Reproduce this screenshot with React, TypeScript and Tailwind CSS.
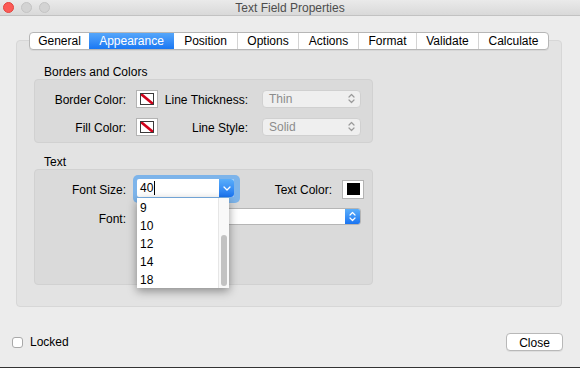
import React from "react";

const tabs: [string, number][] = [
  ["General", 59],
  ["Appearance", 85],
  ["Position", 63],
  ["Options", 61],
  ["Actions", 60],
  ["Format", 58],
  ["Validate", 62],
  ["Calculate", 70],
];

function UpDown({ color }: { color: string }) {
  return (
    <svg width="7" height="11" viewBox="0 0 7 11" fill="none">
      <path d="M1 4 L3.5 1.5 L6 4" stroke={color} strokeWidth="1.2" strokeLinecap="round" strokeLinejoin="round" />
      <path d="M1 7 L3.5 9.5 L6 7" stroke={color} strokeWidth="1.2" strokeLinecap="round" strokeLinejoin="round" />
    </svg>
  );
}

function Down() {
  return (
    <svg width="8" height="5" viewBox="0 0 8 5" fill="none">
      <path d="M1 1 L4 4 L7 1" stroke="white" strokeWidth="1.3" strokeLinecap="round" strokeLinejoin="round" />
    </svg>
  );
}

function NoColorSwatch() {
  return (
    <div className="w-[22px] h-[18px] border border-[#b3b3b3] bg-white flex items-center justify-center">
      <div className="w-[14px] h-[12px] border border-[#3a3a3a] bg-white relative overflow-hidden">
        <svg width="12" height="10" viewBox="0 0 12 10" className="absolute inset-0">
          <line x1="0" y1="0" x2="12" y2="10" stroke="#d0021b" strokeWidth="2.6" />
        </svg>
      </div>
    </div>
  );
}

function DisabledSelect({ value }: { value: string }) {
  return (
    <div className="w-[99px] h-[18px] rounded-[4px] border border-[#d0d0d0] bg-[#efefef] flex items-center justify-between pl-[6px] pr-[5px] text-[#8c8c8c]">
      <span>{value}</span>
      <UpDown color="#9a9a9a" />
    </div>
  );
}

export default function App() {
  return (
    <div className="w-[580px] h-[368px] bg-[#ececec] font-['Liberation_Sans',Arial,sans-serif] text-[12px] leading-[14px] text-black flex flex-col overflow-hidden relative">
      {/* title bar */}
      <div className="h-[16px] shrink-0 bg-gradient-to-b from-[#eaeaea] to-[#d9d9d9] border-b border-[#c2c2c2] flex items-center relative">
        <div className="flex gap-[7px] pl-[3px] relative z-10">
          <span className="w-[11px] h-[11px] rounded-full bg-[#fc5b57] border border-[#e2453f]" />
          <span className="w-[11px] h-[11px] rounded-full bg-[#d3d3d3] border border-[#c4c4c4]" />
          <span className="w-[11px] h-[11px] rounded-full bg-[#d3d3d3] border border-[#c4c4c4]" />
        </div>
        <div className="absolute inset-0 flex items-center justify-center text-[#4d4d4d]">Text Field Properties</div>
      </div>

      {/* tab bar */}
      <div className="mt-[16px] flex justify-center relative z-10">
        <div className="ml-[-2px] w-[520px] h-[18px] flex rounded-[4px] border border-[#b6b6b6] bg-white overflow-hidden shadow-[0_1px_0_rgba(0,0,0,0.05)]">
          {tabs.map(([name, w], i) => (
            <div
              key={name}
              style={{ width: w }}
              className={
                "h-full flex items-center justify-center leading-[16px] " +
                (i === 1
                  ? "bg-gradient-to-b from-[#55a6fa] to-[#1877f3] text-white"
                  : i >= 3
                  ? "border-l border-[#d4d4d4]"
                  : "")
              }
            >
              {name}
            </div>
          ))}
        </div>
      </div>

      {/* tab box */}
      <div className="ml-[16px] mt-[-10px] w-[546px] h-[267px] shrink-0 bg-[#e3e3e3] border border-[#d7d7d7] rounded-[4px] pt-[24px] pl-[17px]">
        <div className="pl-[10px] h-[14px]">Borders and Colors</div>
        <div className="w-[339px] h-[64px] bg-[#dadada] border border-[#d1d1d1] rounded-[4px] pt-[9px] flex flex-col gap-[9px]">
          <div className="flex items-center h-[19px]">
            <div className="w-[91px] text-right pt-[2px]">Border Color:</div>
            <div className="ml-[10px]"><NoColorSwatch /></div>
            <div className="w-[90px] text-right pt-[2px]">Line Thickness:</div>
            <div className="ml-[14px]"><DisabledSelect value="Thin" /></div>
          </div>
          <div className="flex items-center h-[19px]">
            <div className="w-[91px] text-right pt-[2px]">Fill Color:</div>
            <div className="ml-[10px]"><NoColorSwatch /></div>
            <div className="w-[90px] text-right pt-[2px]">Line Style:</div>
            <div className="ml-[14px]"><DisabledSelect value="Solid" /></div>
          </div>
        </div>

        <div className="pl-[10px] h-[14px] mt-[12px]">Text</div>
        <div className="w-[339px] h-[116px] bg-[#dadada] border border-[#d1d1d1] rounded-[4px] pt-[5px]">
          <div className="flex items-center h-[28px]">
            <div className="w-[91px] text-right pt-[1px]">Font Size:</div>
            <div className="ml-[7px] relative w-[107px] h-[28px] rounded-[5px] bg-[#7db4ea] z-20">
              <div className="absolute left-[4px] top-[4px] w-[97px] h-[18px] bg-white flex rounded-[2px]">
                <div className="flex-1 flex items-center pl-[3px]">
                  <span>40</span>
                  <span className="w-px h-[14px] bg-black ml-[1px]" />
                </div>
                <div className="w-[15px] h-full bg-gradient-to-b from-[#5aaefa] to-[#1a74f1] rounded-r-[3px] flex items-center justify-center">
                  <Down />
                </div>
              </div>
              {/* dropdown list */}
              <div className="absolute left-[4px] top-[23px] w-[92px] h-[90px] bg-white shadow-[0_3px_9px_rgba(0,0,0,0.4)] flex">
                <div className="flex-1 flex flex-col">
                  {["9", "10", "12", "14", "18"].map((v) => (
                    <div key={v} className="h-[18px] flex items-center pl-[3px] pt-[1px]">{v}</div>
                  ))}
                </div>
                <div className="w-[11px] h-full bg-[#f9f9f9] border-l border-[#e6e6e6] relative">
                  <div className="absolute left-[2px] top-[37px] w-[6px] h-[51px] rounded-full bg-[#c2c2c2]" />
                </div>
              </div>
            </div>
            <div className="w-[92px] text-right pt-[1px]">Text Color:</div>
            <div className="ml-[10px] w-[22px] h-[19px] border border-[#b3b3b3] bg-white flex items-center justify-center">
              <div className="w-[13px] h-[12px] bg-black" />
            </div>
          </div>
          <div className="flex items-center h-[17px] mt-[5px]">
            <div className="w-[91px] text-right pt-[4px]">Font:</div>
            <div className="ml-[11px] w-[224px] h-[17px] bg-white border border-[#b5b5b5] rounded-[3px] flex justify-end overflow-hidden">
              <div className="w-[15px] h-full bg-gradient-to-b from-[#5aaefa] to-[#1a74f1] flex items-center justify-center">
                <UpDown color="white" />
              </div>
            </div>
          </div>
        </div>
      </div>

      {/* bottom row */}
      <div className="mt-[26px] h-[18px] flex items-center justify-between pl-[12px] pr-[17px]">
        <div className="flex items-center">
          <span className="w-[11px] h-[11px] rounded-[3px] border border-[#a9a9a9] bg-white" />
          <span className="ml-[7px]">Locked</span>
        </div>
        <div className="w-[57px] h-[18px] rounded-[4px] border border-[#b8b8b8] bg-white flex items-center justify-center pt-[1px] shadow-[0_1px_0_rgba(0,0,0,0.06)]">
          Close
        </div>
      </div>

      <div className="absolute left-0 bottom-0 w-full h-px bg-[#333333]" />
    </div>
  );
}
